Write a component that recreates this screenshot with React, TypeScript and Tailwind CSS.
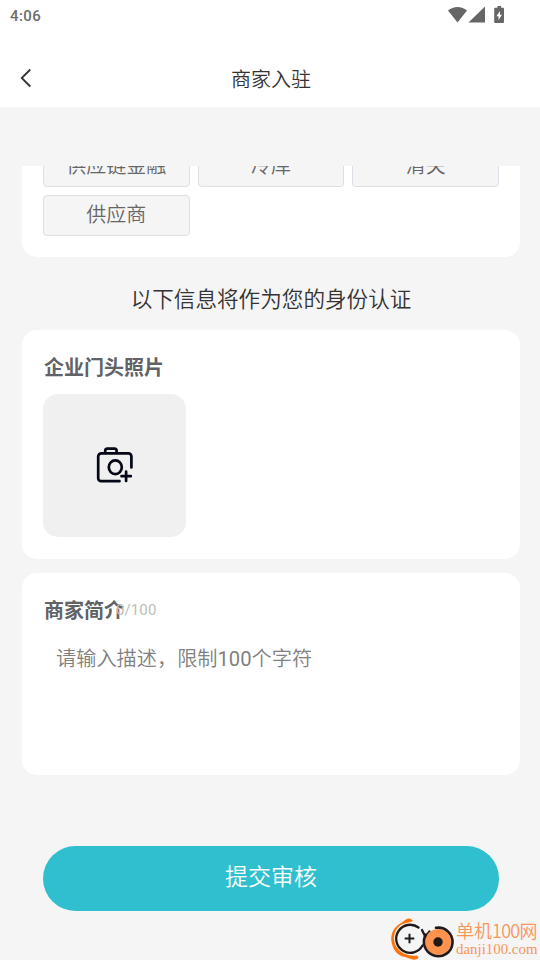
import React from "react";

const categories = ["供应链金融", "冷库", "清关", "供应商"];

const StatusBar = () => {
  return (
    <div className="flex h-8 items-center justify-between pl-[10px] pr-[35px] text-[#6c6c6c]">
      <span className="text-[15px] font-medium leading-8 tracking-[0.400px]">
        4:06
      </span>
      <svg width="57" height="18" viewBox="0 0 57 18" fill="#666" className="-mt-[3px]">
        <path d="M0 4.600C5.500-.2 13.500-.2 19 4.600L9.500 16.500z" />
        <path d="M37 0.600V16.500H20.500z" />
        <path
          fillRule="evenodd"
          d="M49.500 0h3.600v1.700H55a1 1 0 0 1 1 1V16a1 1 0 0 1-1 1h-7.800a1 1 0 0 1-1-1V2.700a1 1 0 0 1 1-1h2.300zM52 5l-3.600 5.200h2.100V14l3.500-5.200h-2z"
        />
      </svg>
    </div>
  );
};

const CameraIcon = () => {
  return (
    <svg
      width="38"
      height="38"
      viewBox="0 0 38 38"
      fill="none"
      stroke="#040816"
      strokeWidth="2.700"
      strokeLinecap="round"
      strokeLinejoin="round"
      className="mb-px ml-[1px]"
    >
      <path d="M23.500 35.200H5.200a3 3 0 0 1-3-3V10.500a3.200 3.200 0 0 1 3.200-3.200h27a3 3 0 0 1 3 3V21.500" />
      <path d="M9.200 7V4.800a2.200 2.200 0 0 1 2.200-2.200h7a2.200 2.200 0 0 1 2.200 2.200V7" />
      <ellipse cx="19.300" cy="21.300" rx="6.500" ry="6.900" />
      <path d="M25.500 30.200h9.300M30.100 25.700v9.300" />
    </svg>
  );
};

const Watermark = () => {
  return (
    <div className="absolute bottom-0 right-0 flex h-[44px] w-[150px] text-[#fa965a]">
      <svg width="65" height="44" viewBox="0 0 65 44" fill="none" className="shrink-0">
        <path
          d="M23 5C21 2 18 1.500 15 4C12 7 8 8 5 12C1 17 0.500 23 2 28C4 36 9 40 15 41C19 42 23 45 27 43C29 42 28.500 40.500 27 39.500C20 40.500 12 38 8 33C2 26 3 16 9 10.500C13 6.500 18 7.500 23 5z"
          fill="#ff7308"
        />
        <circle cx="19.500" cy="22.500" r="14.500" fill="#f5f5f5" />
        <path
          d="M28.500 11.500A14 14 0 1 0 32.500 29.500"
          stroke="#201a1b"
          strokeWidth="2.300"
          strokeLinecap="round"
        />
        <path
          d="M32 14l3 6M39.500 15.500l-4 5"
          stroke="#201a1b"
          strokeWidth="2.300"
          strokeLinecap="round"
        />
        <circle cx="48" cy="26" r="13" fill="#ff934d" />
        <path
          d="M46 11.800A14.300 14.300 0 1 1 36 18.500"
          stroke="#201a1b"
          strokeWidth="2.600"
          strokeLinecap="round"
        />
        <path d="M14.700 22.500h9.600M19.500 17.700v9.600" stroke="#201a1b" strokeWidth="2" />
        <circle cx="48" cy="26" r="4.700" fill="#201a1b" />
      </svg>
      <div className="flex flex-col whitespace-nowrap pl-[1px] pt-[4px]">
        <span className="font-['Noto_Sans_CJK_SC',sans-serif] text-[18px] leading-[21px]">
          单机<span className="tracking-[-0.700px]">100</span>网
        </span>
        <span className="font-['Liberation_Serif',serif] text-[14.900px] font-normal leading-[16px]">
          danji100.com
        </span>
      </div>
    </div>
  );
};

const App = () => {
  return (
    <div className="relative flex h-[960px] w-[540px] flex-col overflow-hidden bg-[#f5f5f5] font-[Roboto,'Noto_Sans_CJK_SC',sans-serif] font-[350]">
      <header className="h-[107px] shrink-0 bg-white">
        <StatusBar />
        <div className="grid h-[75px] grid-cols-[60px_1fr_60px] items-center pt-[17px]">
          <svg
            width="12"
            height="20"
            viewBox="0 0 12 20"
            fill="none"
            stroke="#333"
            strokeWidth="1.800"
            className="ml-5"
          >
            <path d="M10.300 1.500L1.700 10l8.600 8.500" />
          </svg>
          <h1 className="pl-[2px] pt-[3px] text-center text-[20px] leading-[30px] text-[#333]">
            商家入驻
          </h1>
        </div>
      </header>

      <main className="flex flex-col px-5 pl-[22px] pt-[59px]">
        <section className="flex h-[91px] flex-col justify-end overflow-hidden rounded-b-[15px] bg-white px-[21px] pb-[21px]">
          <div className="grid grid-cols-3 gap-2">
            {categories.map((name) => (
              <button
                key={name}
                className="h-[41px] rounded-[4px] border border-[#dcdfe6] bg-[#f5f5f5] pb-px text-[20px] leading-[36px] text-[#666]"
              >
                {name}
              </button>
            ))}
          </div>
        </section>

        <p className="h-[73px] pt-[27px] text-center text-[21.600px] leading-[32px] text-[#333]">
          以下信息将作为您的身份认证
        </p>

        <section className="h-[229px] rounded-[15px] bg-white px-[21px] pt-[23px]">
          <h2 className="pl-[1px] text-[20px] font-bold leading-[30px] text-[#606266]">
            企业门头照片
          </h2>
          <button className="mt-[11px] flex h-[143px] w-[143px] items-center justify-center rounded-[15px] bg-[#f0f0f0]">
            <CameraIcon />
          </button>
        </section>

        <section className="mt-[14px] h-[202px] rounded-[15px] bg-white px-[21px] pt-[23px]">
          <div className="flex items-start pl-[1px]">
            <h2 className="w-[72px] whitespace-nowrap text-[20px] font-bold leading-[30px] text-[#606266]">
              商家简介
            </h2>
            <span className="text-[15px] font-normal leading-[28px] tracking-[0.100px] text-[#bbb]">
              0/100
            </span>
          </div>
          <p className="pl-[13px] pt-[18px] text-[20.200px] leading-[30px] text-[#808080]">
            请输入描述，限制<span className="font-normal">100</span>个字符
          </p>
        </section>

        <button className="mx-[21px] mt-[71px] h-[65px] rounded-full bg-[#30bfcf] text-[23px] text-white">
          提交审核
        </button>
      </main>

      <Watermark />
    </div>
  );
};

export default App;
